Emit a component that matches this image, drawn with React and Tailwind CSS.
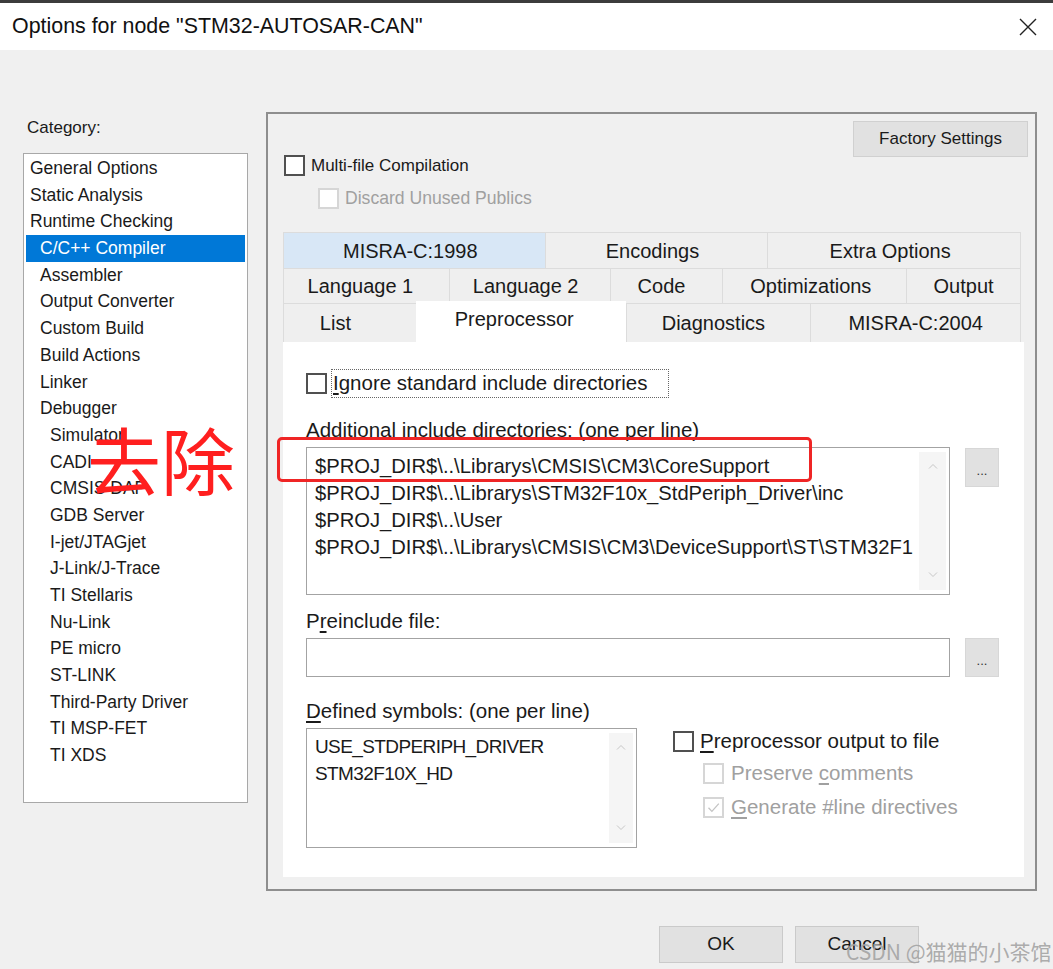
import React from 'react';

const FONT = "font-['Liberation_Sans',Arial,sans-serif]";

const categories = [
    ['General Options', 1],
    ['Static Analysis', 1],
    ['Runtime Checking', 1],
    ['C/C++ Compiler', 2, true],
    ['Assembler', 2],
    ['Output Converter', 2],
    ['Custom Build', 2],
    ['Build Actions', 2],
    ['Linker', 2],
    ['Debugger', 2],
    ['Simulator', 3],
    ['CADI', 3],
    ['CMSIS DAP', 3],
    ['GDB Server', 3],
    ['I-jet/JTAGjet', 3],
    ['J-Link/J-Trace', 3],
    ['TI Stellaris', 3],
    ['Nu-Link', 3],
    ['PE micro', 3],
    ['ST-LINK', 3],
    ['Third-Party Driver', 3],
    ['TI MSP-FET', 3],
    ['TI XDS', 3],
];

const indent = { 1: 'pl-[4px]', 2: 'pl-[14px]', 3: 'pl-[24px]' };

// tab rows: [label, width class, text shift class, state]
const tabRows = [
    {
        h: 'h-[36px]',
        tabs: [
            ['MISRA-C:1998', 'w-[262px]', 'pr-[8px]', 'hover'],
            ['Encodings', 'w-[223px]', 'pr-[8px]'],
            ['Extra Options', 'w-[253px]', 'pr-[8px]'],
        ],
    },
    {
        h: 'h-[35px]',
        tabs: [
            ['Language 1', 'w-[166px]', 'pr-[12px]'],
            ['Language 2', 'w-[161px]', 'pr-[8px]'],
            ['Code', 'w-[113px]', 'pr-[10px]'],
            ['Optimizations', 'w-[184px]', 'pr-[8px]'],
            ['Output', 'w-[114px]', 'pr-0'],
        ],
    },
    {
        h: 'h-[39px]',
        tabs: [
            ['List', 'w-[133px]', 'pr-[29px]'],
            ['Preprocessor', 'w-[210px]', 'pr-[13px]', 'active'],
            ['Diagnostics', 'w-[185px]', 'pr-[10px]'],
            ['MISRA-C:2004', 'w-[210px]', 'pr-0'],
        ],
    },
];

function Check({ disabled = false, checked = false }) {
    return (
        <span
            className={`flex h-[21px] w-[21px] shrink-0 items-center justify-center bg-white border-2 ${
                disabled ? 'border-[#d6d6d6]' : 'border-[#505050]'
            }`}
        >
            {checked && (
                <svg width="15" height="15" viewBox="0 0 15 15">
                    <path d="M2.5 7.8l3.4 3.6L12.8 3.6" fill="none" stroke="#c4c4c4" strokeWidth="1.3" />
                </svg>
            )}
        </span>
    );
}

function Chevron({ up }) {
    return (
        <svg width="10" height="6" viewBox="0 0 10 6">
            <path d={up ? 'M1 5.5L5 1.5l4 4' : 'M1 0.5l4 4 4-4'} fill="none" stroke="#c6c6c6" strokeWidth="1" />
        </svg>
    );
}

function ScrollStrip({ w }) {
    return (
        <div className={`${w} my-[4px] mr-[3px] flex flex-col items-center justify-between bg-[#f5f5f5] pt-[11px] pb-[12px]`}>
            <Chevron up />
            <Chevron />
        </div>
    );
}

function DotsButton({ h }) {
    return (
        <button className={`${h} flex w-[34px] items-end justify-center border border-[#d7d7d7] bg-[#e1e1e1] pb-[9px] text-[13px] leading-none text-[#333]`}>
            ...
        </button>
    );
}

function Tab({ label, w, shift, state, h }) {
    if (state === 'active') {
        return (
            <div className={`${w} relative z-10 -mt-[2px] flex h-[41px] justify-center bg-white pt-[6px] ${shift} text-[20px] leading-[24px]`}>
                {label}
            </div>
        );
    }
    return (
        <div
            className={`${w} ${h} flex items-center justify-center border-l border-t border-[#dcdcdc] ${shift} text-[20px] leading-[24px] ${
                state === 'hover' ? 'bg-[#d8e7f6]' : 'bg-[#efefef]'
            }`}
        >
            {label}
        </div>
    );
}

export default function App() {
    return (
        <div className={`relative h-[969px] w-[1053px] overflow-hidden bg-[#f0f0f0] text-[#1a1a1a] ${FONT}`}>
            <div className="h-[3px] bg-[#3c3c3c]" />
            <div className="flex h-[47px] items-center justify-between bg-white pl-[12px] pr-[16px]">
                <span className="text-[21.4px] leading-none text-[#111]">Options for node "STM32-AUTOSAR-CAN"</span>
                <svg width="18" height="18" viewBox="0 0 18 18">
                    <path d="M1 1l16 16M17 1L1 17" stroke="#222" strokeWidth="1.4" />
                </svg>
            </div>

            <div className="flex items-start">
                {/* Category column */}
                <div className="ml-[23px] flex w-[225px] flex-col pt-[68px]">
                    <div className="ml-[4px] h-[20px] text-[17px] leading-[20px]">Category:</div>
                    <div className="mt-[15px] h-[650px] border border-[#a8a8a8] bg-white px-[2px] pt-[1px]">
                        {categories.map(([name, level, sel]) => (
                            <div
                                key={name}
                                className={`h-[26.7px] whitespace-nowrap text-[17.5px] leading-[26.7px] ${indent[level]} ${
                                    sel ? 'bg-[#0078d7] text-white' : ''
                                }`}
                            >
                                {name}
                            </div>
                        ))}
                    </div>
                </div>

                {/* Options panel */}
                <div className="ml-[18px] mt-[62px] flex h-[779px] w-[771px] flex-col border-2 border-[#8e8e8e]">
                    <div className="flex items-start justify-between pl-[16px] pr-[7px]">
                        <div className="flex flex-col pt-[41px]">
                            <div className="flex h-[21px] items-center gap-[6px] text-[17px]">
                                <Check />
                                <span>Multi-file Compilation</span>
                            </div>
                            <div className="mt-[12px] flex h-[21px] items-center gap-[6px] pl-[34px] text-[17.6px] text-[#a0a0a0]">
                                <Check disabled />
                                <span>Discard Unused Publics</span>
                            </div>
                        </div>
                        <button className="mt-[7px] h-[36px] w-[175px] border border-[#d0d0d0] bg-[#e1e1e1] text-[17px]">
                            Factory Settings
                        </button>
                    </div>

                    <div className="ml-[15px] mt-[23px] flex w-[741px] flex-col">
                        {tabRows.map((row, i) => (
                            <div key={i} className={`flex ${row.h} w-[738px] border-r border-[#dcdcdc]`}>
                                {row.tabs.map(([label, w, shift, state]) => (
                                    <Tab key={label} label={label} w={w} shift={shift} state={state} h={row.h} />
                                ))}
                            </div>
                        ))}

                        {/* Preprocessor page */}
                        <div className="flex h-[535px] w-[741px] flex-col bg-white pl-[23px]">
                            <div className="mt-[27px] flex h-[29px] items-center">
                                <Check />
                                <div className="ml-[4px] flex h-[29px] w-[338px] items-center border border-dotted border-[#666] pl-[1px] text-[20.5px]">
                                    <span className="underline underline-offset-[3px]">I</span>gnore standard include directories
                                </div>
                            </div>

                            <div className="mt-[20px] h-[24px] text-[20.5px] leading-[24px]">
                                Additional include directories: (one per line)
                            </div>
                            <div className="mt-[5px] flex items-start gap-[15px]">
                                <div className="flex h-[148px] w-[644px] border border-[#a3a3a3] bg-white">
                                    <div className="flex-1 overflow-hidden whitespace-nowrap pl-[8px] pt-[5px] text-[20.2px] leading-[27px]">
                                        <div>$PROJ_DIR$\..\Librarys\CMSIS\CM3\CoreSupport</div>
                                        <div>$PROJ_DIR$\..\Librarys\STM32F10x_StdPeriph_Driver\inc</div>
                                        <div>$PROJ_DIR$\..\User</div>
                                        <div>$PROJ_DIR$\..\Librarys\CMSIS\CM3\DeviceSupport\ST\STM32F1</div>
                                    </div>
                                    <ScrollStrip w="w-[27px]" />
                                </div>
                                <div className="mt-[1px]">
                                    <DotsButton h="h-[39px]" />
                                </div>
                            </div>

                            <div className="mt-[14px] h-[24px] text-[20.5px] leading-[24px]">
                                P<span className="underline underline-offset-[3px]">r</span>einclude file:
                            </div>
                            <div className="mt-[5px] flex items-start gap-[15px]">
                                <div className="h-[39px] w-[644px] border border-[#a3a3a3] bg-white" />
                                <DotsButton h="h-[39px]" />
                            </div>

                            <div className="mt-[22px] h-[24px] text-[20.5px] leading-[24px]">
                                <span className="underline underline-offset-[3px]">D</span>efined symbols: (one per line)
                            </div>
                            <div className="mt-[5px] flex items-start">
                                <div className="flex h-[120px] w-[331px] border border-[#a3a3a3] bg-white">
                                    <div className="flex-1 whitespace-nowrap pl-[8px] pt-[4px] text-[19px] leading-[27px] tracking-[-0.6px]">
                                        <div>USE_STDPERIPH_DRIVER</div>
                                        <div>STM32F10X_HD</div>
                                    </div>
                                    <ScrollStrip w="w-[24px]" />
                                </div>
                                <div className="ml-[36px] flex flex-col pt-[3px] text-[20.5px]">
                                    <div className="flex h-[21px] items-center gap-[6px]">
                                        <Check />
                                        <span>
                                            <span className="underline underline-offset-[3px]">P</span>reprocessor output to file
                                        </span>
                                    </div>
                                    <div className="mt-[11px] flex h-[21px] items-center gap-[7px] pl-[30px] text-[#a0a0a0]">
                                        <Check disabled />
                                        <span>
                                            Preserve <span className="underline underline-offset-[3px]">c</span>omments
                                        </span>
                                    </div>
                                    <div className="mt-[13px] flex h-[21px] items-center gap-[7px] pl-[30px] text-[#a0a0a0]">
                                        <Check disabled checked />
                                        <span>
                                            <span className="underline underline-offset-[3px]">G</span>enerate #line directives
                                        </span>
                                    </div>
                                </div>
                            </div>
                        </div>
                    </div>
                </div>
            </div>

            <div className="mt-[35px] flex justify-end gap-[12px] pr-[134px]">
                <button className="h-[37px] w-[124px] border border-[#cacaca] bg-[#e1e1e1] text-[19px]">OK</button>
                <button className="h-[37px] w-[124px] border border-[#cacaca] bg-[#e1e1e1] text-[19px]">Cancel</button>
            </div>

            {/* annotation overlays */}
            <div className="pointer-events-none absolute left-[87px] top-[421px] font-['Noto_Sans_CJK_SC',sans-serif] text-[74px] leading-[74px] text-[#ff1f1f]">
                去除
            </div>
            <div className="pointer-events-none absolute left-[277px] top-[437px] h-[45px] w-[535px] rounded-[5px] border-[3px] border-[#ef2525]" />
            <div className="pointer-events-none absolute left-[846px] top-[938px] whitespace-nowrap font-['Noto_Sans_CJK_SC',sans-serif] text-[21px] leading-[26px] text-[#a3a3a3]/90">
                CSDN @猫猫的小茶馆
            </div>
        </div>
    );
}
